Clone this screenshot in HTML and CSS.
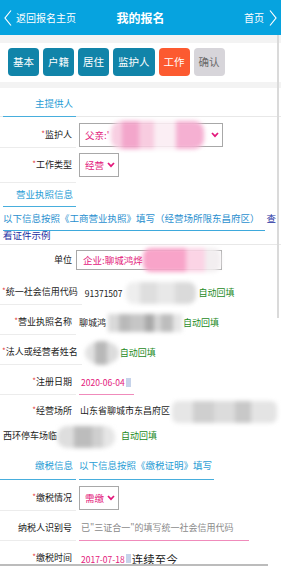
FILE: index.html
```html
<!DOCTYPE html>
<html lang="zh-CN">
<head>
<meta charset="utf-8">
<title>我的报名</title>
<link rel="stylesheet" href="styles.css">
</head>
<body>
<div class="page">
  <header class="topbar">
    <a class="back">
      <svg class="chev" width="8" height="16" viewBox="0 0 8 16"><path d="M7 0.5 L1 8 L7 15.5" fill="none" stroke="#fff" stroke-width="1.2"/></svg>
      <span>返回报名主页</span>
    </a>
    <h1 class="title">我的报名</h1>
    <a class="home">
      <span>首页</span>
      <svg class="chev" width="8" height="16" viewBox="0 0 8 16"><path d="M1 0.5 L7 8 L1 15.5" fill="none" stroke="#fff" stroke-width="1.2"/></svg>
    </a>
  </header>
  <div class="band band-top"></div>
  <nav class="tabs">
    <span class="tab">基本</span>
    <span class="tab">户籍</span>
    <span class="tab">居住</span>
    <span class="tab">监护人</span>
    <span class="tab tab-active">工作</span>
    <span class="tab tab-off">确认</span>
  </nav>
  <div class="band band-mid"></div>

  <div class="sec-head sec-first"><span class="sec-title">主提供人</span></div>

  <div class="row row-sel-a">
    <div class="label"><i class="req">*</i>监护人</div>
    <div class="value">
      <div class="select select-wide"><span>父亲:'</span><span class="blob b-guardian"></span><svg class="arrow" width="8" height="6" viewBox="0 0 8 6"><path d="M1 1 L4 4.2 L7 1" fill="none" stroke="#e3187b" stroke-width="1.7"/></svg></div>
    </div>
  </div>

  <div class="row row-sel-b">
    <div class="label"><i class="req">*</i>工作类型</div>
    <div class="value">
      <div class="select select-narrow"><span>经营</span><svg class="arrow" width="8" height="6" viewBox="0 0 8 6"><path d="M1 1 L4 4.2 L7 1" fill="none" stroke="#e3187b" stroke-width="1.7"/></svg></div>
    </div>
  </div>

  <div class="sec-head sec-plain"><span class="sec-title sec-title-b">营业执照信息</span></div>

  <p class="intro"><span class="intro-text">以下信息按照《工商营业执照》填写（经营场所限东昌府区）</span><a class="example"><span>查</span><span>看证件示例</span></a></p>

  <div class="row row-unit">
    <div class="label label-noline">单位</div>
    <div class="value">
      <div class="textbox"><span>企业:聊城鸿烨</span><span class="blob b-unit"></span></div>
    </div>
  </div>

  <div class="row row-text">
    <div class="label"><i class="req">*</i>统一社会信用代码</div>
    <div class="value"><span class="num">91371507</span><span class="blob b-credit"></span><span class="auto">自动回填</span></div>
  </div>

  <div class="row row-text">
    <div class="label"><i class="req">*</i>营业执照名称</div>
    <div class="value value-tight"><span>聊城鸿</span><span class="blob b-name"></span><span class="auto">自动回填</span></div>
  </div>

  <div class="row row-text">
    <div class="label"><i class="req">*</i>法人或经营者姓名</div>
    <div class="value"><span class="blob b-legal"></span><span class="auto auto-near">自动回填</span></div>
  </div>

  <div class="row row-text">
    <div class="label"><i class="req">*</i>注册日期</div>
    <div class="value value-tight">
      <div class="date date-short"><span class="date-text">2020-06-04</span><span class="dicon"></span></div>
    </div>
  </div>

  <div class="addr">
    <span class="addr-label"><i class="req">*</i>经营场所</span>山东省聊城市东昌府区<span class="blob b-addr1"></span>西环停车场临<span class="blob b-addr2"></span><span class="auto auto-addr">自动回填</span>
  </div>

  <div class="sec-head sec-tax">
    <span class="sec-title">缴税信息</span>
    <span class="sec-note">以下信息按照《缴税证明》填写</span>
  </div>

  <div class="row row-sel-a">
    <div class="label"><i class="req">*</i>缴税情况</div>
    <div class="value">
      <div class="select select-narrow"><span>需缴</span><svg class="arrow" width="8" height="6" viewBox="0 0 8 6"><path d="M1 1 L4 4.2 L7 1" fill="none" stroke="#e3187b" stroke-width="1.7"/></svg></div>
    </div>
  </div>

  <div class="row row-text">
    <div class="label">纳税人识别号</div>
    <div class="value value-tight">
      <div class="date date-long"><span class="placeholder">已"三证合一"的填写统一社会信用代码</span></div>
    </div>
  </div>

  <div class="row row-text">
    <div class="label label-noline"><i class="req">*</i>缴税时间</div>
    <div class="value value-tight">
      <span class="date-text date-pad">2017-07-18</span><span class="dicon"></span><span class="cont">连续至今</span>
    </div>
  </div>
</div>
</body>
</html>
```

FILE: styles.css
```css
html, body {
  margin: 0;
  padding: 0;
  background: #fff;
}

body {
  font-family: "Noto Sans CJK SC", "Noto Sans", sans-serif;
  color: #222;
  width: 281px;
  height: 568px;
  overflow: hidden;
}

.page {
  position: relative;
  width: 281px;
}

.page::after {
  content: "";
  position: absolute;
  left: 277px;
  top: 35px;
  width: 2px;
  height: 283px;
  background: #dadada;
}

.page::before {
  content: "";
  position: absolute;
  left: 0;
  top: 564px;
  width: 268px;
  height: 2px;
  background: #bcbcbc;
  z-index: 2;
}

/* header */
.topbar {
  height: 35px;
  background: #06a3df;
  color: #fff;
  display: grid;
  grid-template-columns: 1fr auto 1fr;
  align-items: center;
}

.back {
  display: flex;
  align-items: center;
  gap: 4px;
  padding-left: 4px;
  font-size: 10px;
}

.home {
  justify-self: end;
  display: flex;
  align-items: center;
  gap: 5px;
  padding-right: 4px;
  font-size: 10px;
}

.chev {
  display: block;
}

.title {
  margin: 0;
  font-size: 12px;
  font-weight: bold;
  line-height: 16px;
}

.band {
  background: #f3f3f3;
}

.band-top {
  height: 8px;
}

.band-mid {
  height: 6px;
}

/* tabs */
.tabs {
  display: flex;
  gap: 4px;
  padding: 5px 8px 6px;
}

.tab {
  height: 28px;
  line-height: 28px;
  padding: 0 5px;
  border-radius: 4px;
  background: #1184a9;
  color: #fff;
  font-size: 10.5px;
}

.tab-active {
  background: #fc5a30;
}

.tab-off {
  background: #d7d5da;
  color: #6a6a6a;
}

/* section heads */
.sec-head {
  display: flex;
  font-size: 9.5px;
  line-height: 15px;
  color: #2a9dd5;
}

.sec-first {
  border-bottom: 1px solid #e8e8e8;
}

.sec-title {
  width: 73px;
  margin-left: 3px;
  box-sizing: border-box;
  padding: 8px 3px 5px 0;
  text-align: right;
  border-bottom: 1px solid #47aedd;
  margin-bottom: -1px;
}

.sec-plain .sec-title-b {
  padding: 4px 3px 4px 0;
  margin-bottom: 0;
}

.sec-tax .sec-title {
  width: 76px;
  margin-left: 0;
  padding: 8px 3px 6px 0;
  margin-bottom: 0;
}

.sec-note {
  margin-left: 3px;
  padding: 8px 2px 6px 0;
  border-bottom: 1px solid #47aedd;
}

/* intro paragraph */
.intro {
  margin: 0;
  padding: 3px 4px 0 3px;
  font-size: 9.5px;
  line-height: 17px;
  color: #2a8fcf;
  border-bottom: 1px solid #e8e8e8;
}

.intro-text {
  border-bottom: 1px solid #3ea9dc;
  padding-bottom: 4.5px;
  padding-right: 5px;
}

.example {
  color: #1c2f9f;
  margin-left: 2px;
}

/* rows */
.row {
  display: flex;
  font-size: 9px;
}

.label {
  flex: none;
  min-width: 76px;
  box-sizing: border-box;
  padding-left: 2px;
  padding-right: 4px;
  display: flex;
  align-items: center;
  justify-content: flex-end;
  white-space: nowrap;
  border-bottom: 1px solid #ececec;
  color: #222;
}

.label-noline {
  border-bottom-color: transparent;
}

.req {
  font-style: normal;
  color: #e23a3a;
  font-size: 8px;
  position: relative;
  top: -1px;
}

.value {
  display: flex;
  align-items: center;
  margin-left: 3px;
  white-space: nowrap;
}

.value-tight {
  margin-left: 3px;
}

.row-sel-a > .label,
.row-sel-a > .value {
  padding-top: 6px;
  padding-bottom: 1px;
}

.row-sel-b > .label,
.row-sel-b > .value {
  padding-top: 5px;
  padding-bottom: 6px;
}

.row-unit > .label,
.row-unit > .value {
  padding-top: 5px;
  padding-bottom: 5px;
}

.row-unit > .value {
  margin-left: 0;
}

.row-text > .label,
.row-text > .value {
  padding-top: 8px;
  padding-bottom: 3px;
  line-height: 18px;
}

/* selects */
.select {
  height: 24px;
  box-sizing: border-box;
  border: 1px solid #a8a8a8;
  background: #fff;
  display: flex;
  align-items: center;
  padding: 0 3px 0 5px;
  color: #e3187b;
  font-size: 9.5px;
}

.select-wide {
  width: 144px;
}

.select-narrow {
  width: 40px;
}

.arrow {
  margin-left: auto;
  display: block;
}

.textbox {
  width: 146px;
  height: 20px;
  box-sizing: border-box;
  border: 1px solid #a8a8a8;
  display: flex;
  align-items: center;
  padding-left: 6px;
  color: #e3187b;
  font-size: 9.5px;
}

.num {
  font-size: 8.5px;
  color: #222;
}

.auto {
  color: #1d8a1d;
}

.auto-near {
  margin-left: 1px;
}

.date {
  display: flex;
  align-items: center;
  box-sizing: border-box;
  padding-left: 2px;
  height: 21px;
  margin-bottom: -3px;
  padding-bottom: 3px;
  border-bottom: 1px solid #f08bbb;
}

.date-short {
  width: 55px;
}

.date-long {
  width: 170px;
}

.date-text {
  font-size: 8.5px;
  color: #e3187b;
}

.date-pad {
  padding-left: 2px;
}

.dicon {
  display: inline-block;
  width: 5px;
  height: 9px;
  margin-left: 1px;
  background: #c6d3ea;
}

.placeholder {
  color: #8a8a8a;
  font-size: 9px;
}

.cont {
  font-size: 11.5px;
  color: #222;
  margin-left: 1px;
}

/* address block */
.addr {
  padding: 3px 0 2px 3px;
  font-size: 9px;
  line-height: 25px;
  color: #222;
}

.addr-label {
  display: inline-block;
  width: 73px;
  box-sizing: border-box;
  padding-right: 4px;
  margin-right: 4px;
  text-align: right;
}

.auto-addr {
  margin-left: 6px;
}

/* blurred blocks */
.blob {
  display: inline-block;
  vertical-align: middle;
  filter: blur(2px);
}

.b-guardian {
  width: 93px;
  height: 28px;
  margin: -4px 0 -4px 2px;
  border-radius: 10px;
  background: linear-gradient(to right, #f8cfe2 0 12%, #f3a6cb 12% 30%, #f8cce0 30% 46%, #fbeef4 46% 70%, #f5b0d2 70% 100%);
}

.b-unit {
  width: 80px;
  height: 24px;
  margin: -3px 0;
  border-radius: 8px;
  background: linear-gradient(to right, #f8a4c9 0 55%, #fbd4e5 55% 80%, #f2eef0 80%);
}

.b-credit {
  width: 70px;
  height: 22px;
  margin: -3px 3px -3px 3px;
  border-radius: 8px;
  background: linear-gradient(to right, #eeeeee 0 20%, #dedede 20% 45%, #e8e8e8 45% 70%, #dadada 70%);
}

.b-name {
  width: 74px;
  height: 18px;
  margin: -2px 1px -2px 2px;
  background: linear-gradient(to right, #d9d9d9 0 15%, #b9b9b9 15% 30%, #c6c6c6 30% 50%, #a9a9a9 50% 62%, #d6d6d6 62% 72%, #bdbdbd 72% 88%, #e6e6e6 88%);
}

.b-legal {
  width: 34px;
  height: 24px;
  margin: -3px 0;
  border-radius: 50%;
  background: linear-gradient(to right, #e2e2e2 0 30%, #b8b8b8 30% 65%, #dcdcdc 65%);
}

.b-addr1 {
  width: 105px;
  height: 22px;
  margin: -3px 0 -3px 2px;
  border-radius: 6px;
  background: linear-gradient(to right, #e6e6e6 0 20%, #cfcfcf 20% 40%, #dcdcdc 40% 60%, #c8c8c8 60% 75%, #e4e4e4 75%);
}

.b-addr2 {
  width: 58px;
  height: 22px;
  margin: -3px 0 -3px 0;
  border-radius: 10px;
  background: linear-gradient(to right, #dedede 0 30%, #bcbcbc 30% 60%, #cfcfcf 60% 80%, #e6e6e6 80%);
}
```
